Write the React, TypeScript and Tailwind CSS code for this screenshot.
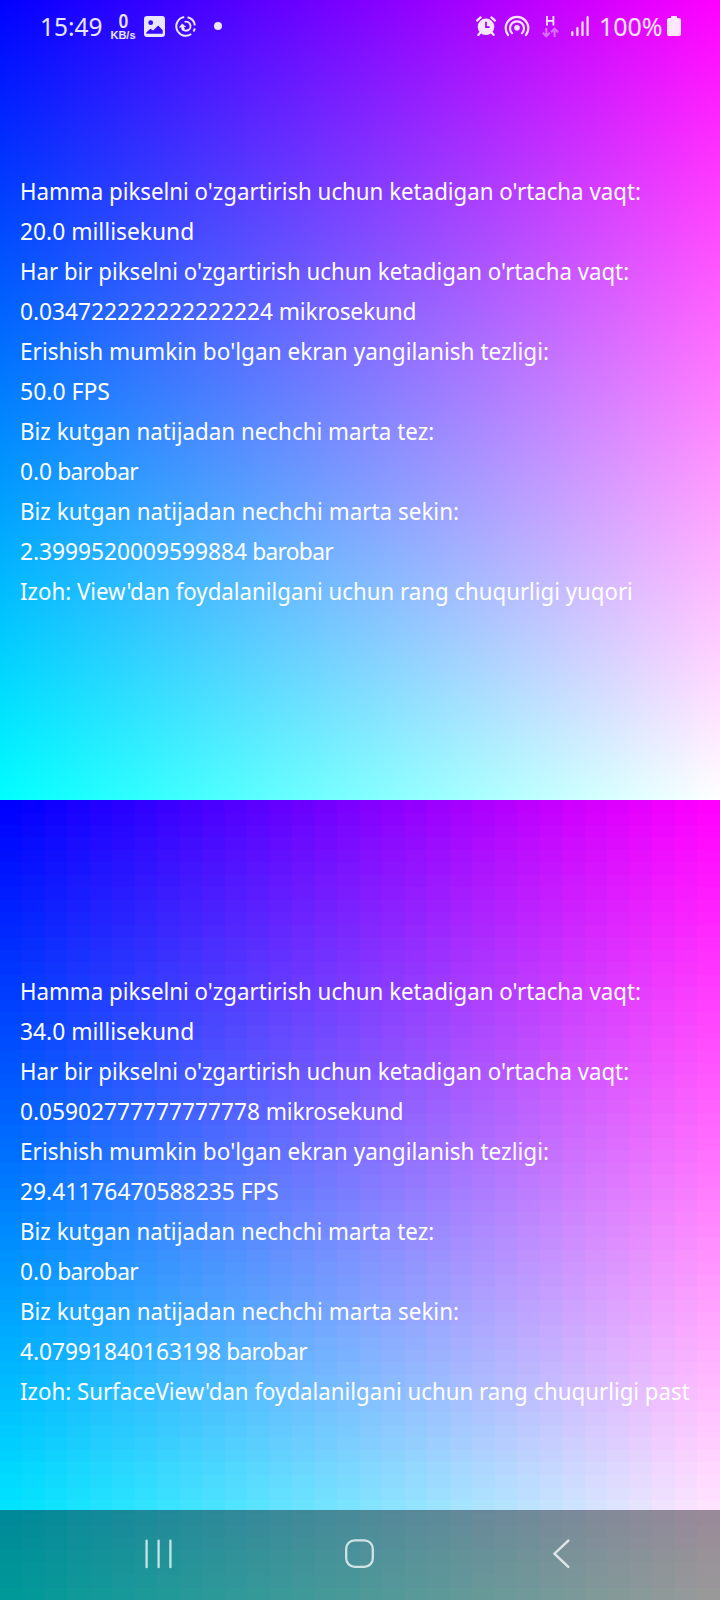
type Line = { value?: string; text: string; scale: string; tracking?: string };

const viewLines: Line[] = [
  { text: "Hamma pikselni o'zgartirish uchun ketadigan o'rtacha vaqt:", scale: "scale-x-[0.928]" },
  { text: "20.0 millisekund", scale: "scale-x-[0.95]" },
  { text: "Har bir pikselni o'zgartirish uchun ketadigan o'rtacha vaqt:", scale: "scale-x-[0.926]" },
  { value: "0.034722222222222224", text: " mikrosekund", scale: "scale-x-[0.947]", tracking: "tracking-[-0.22px]" },
  { text: "Erishish mumkin bo'lgan ekran yangilanish tezligi:", scale: "scale-x-[0.941]" },
  { text: "50.0 FPS", scale: "scale-x-[0.957]" },
  { text: "Biz kutgan natijadan nechchi marta tez:", scale: "scale-x-[0.932]" },
  { value: "0.0", text: " barobar", scale: "scale-x-[0.947]", tracking: "tracking-[-0.75px]" },
  { text: "Biz kutgan natijadan nechchi marta sekin:", scale: "scale-x-[0.934]" },
  { value: "2.3999520009599884", text: " barobar", scale: "scale-x-[0.947]", tracking: "tracking-[-0.75px]" },
  { text: "Izoh: View'dan foydalanilgani uchun rang chuqurligi yuqori", scale: "scale-x-[0.926]" },
];

const surfaceLines: Line[] = [
  viewLines[0],
  { text: "34.0 millisekund", scale: "scale-x-[0.95]" },
  viewLines[2],
  { value: "0.05902777777777778", text: " mikrosekund", scale: "scale-x-[0.947]", tracking: "tracking-[-0.22px]" },
  viewLines[4],
  { text: "29.41176470588235 FPS", scale: "scale-x-[0.95]" },
  viewLines[6],
  viewLines[7],
  viewLines[8],
  { value: "4.07991840163198", text: " barobar", scale: "scale-x-[0.947]", tracking: "tracking-[-0.75px]" },
  { text: "Izoh: SurfaceView'dan foydalanilgani uchun rang chuqurligi past", scale: "scale-x-[0.927]" },
];

// Hard-edged colour steps, one per level of an RGB565 channel.
function steps(direction: string, levels: number, color: (v: number) => string) {
  const stops = Array.from({ length: levels }, (_, i) => {
    const value = Math.round((i * 255) / (levels - 1));
    return `${color(value)} ${(i * 100) / levels}% ${((i + 1) * 100) / levels}%`;
  });
  return `linear-gradient(${direction}, ${stops.join(", ")})`;
}

const lowDepth = [
  steps("to right", 32, (v) => `rgb(${v}, 0, 0)`),
  steps("to bottom", 64, (v) => `rgb(0, ${v}, 0)`),
].join(", ");

function Lines({ lines }: { lines: Line[] }) {
  return (
    <div className="flex flex-col items-start px-5 pt-[171px] text-2xl leading-10 text-white">
      {lines.map((line) => (
        <p key={line.value ?? line.text} className={`h-10 origin-left whitespace-pre ${line.scale}`}>
          {line.value}
          <span className={line.tracking}>{line.text}</span>
        </p>
      ))}
    </div>
  );
}

function StatusBar() {
  return (
    <header className="absolute inset-x-0 top-0 flex h-[52px] items-start text-white/90">
      <span className="ml-10 mt-[6px] w-[69px] origin-left scale-x-[0.94] text-[26px] leading-10">15:49</span>
      <span className="mt-[13px] flex w-7 flex-col items-center text-center font-['Liberation_Sans',sans-serif] font-bold">
        <span className="scale-x-[0.9] font-['Noto_Sans',sans-serif] text-[19px] font-semibold leading-[17px]">0</span>
        <span className="text-[11px] leading-[11px]">KB/s</span>
      </span>
      <svg className="ml-[7px] mt-4 h-[21px] w-[21px]" viewBox="0 0 21 21">
        <path
          fill="currentColor"
          fillRule="evenodd"
          d="M3 0h15a3 3 0 0 1 3 3v15a3 3 0 0 1-3 3H3a3 3 0 0 1-3-3V3a3 3 0 0 1 3-3ZM6.7 4.3a2.4 2.4 0 1 0 0 4.8 2.4 2.4 0 0 0 0-4.8ZM2.3 17.8h16.4v-3.6l-4.5-4.7-5.1 5.1-2.7-1.9-4.1 3.8Z"
        />
      </svg>
      <svg className="ml-[10px] mt-4 h-[21px] w-[21px]" viewBox="0 0 21 21" fill="none" stroke="currentColor" strokeWidth="2">
        <path d="M9.2 1.1A9.4 9.4 0 1 0 16.2 18M18.4 15.5A9.4 9.4 0 0 0 19.8 12.4M19.8 9.3A9.4 9.4 0 0 0 12.6 1.3" />
        <path d="M9.6 5.9A4.5 4.5 0 1 1 7 12.2" />
        <path fill="currentColor" stroke="none" d="m3.8 11.4 3.4-4 4 3.6-2.3.2 1 1.8-2.6 1.2-1-2.8Z" />
      </svg>
      <svg className="ml-[18px] mt-[22px] h-2 w-2" viewBox="0 0 8 8">
        <circle cx="4" cy="4" r="4" fill="currentColor" />
      </svg>
      <svg className="ml-[254px] mt-4 h-5 w-5" viewBox="0 0 20 20">
        <circle cx="10" cy="10.8" r="8.3" fill="currentColor" />
        <path d="M1 4.6 4.6 1.4M19 4.6 15.4 1.4M4.2 16.8 2.3 19M15.8 16.8 17.7 19" stroke="currentColor" strokeWidth="2.2" strokeLinecap="round" />
        <path d="M10 5.8v5.3h3.6" fill="none" stroke="#a400ff" strokeWidth="1.7" />
      </svg>
      <svg className="ml-[8px] mt-[15px] h-[22px] w-[26px]" viewBox="0 0 26 22" fill="none" stroke="currentColor" strokeWidth="2.2" strokeLinecap="round">
        <circle cx="13" cy="12.8" r="2.8" fill="currentColor" stroke="none" />
        <path d="M4 20A11.3 11.3 0 1 1 22 20" />
        <path d="M8 18.2A7 7 0 1 1 18 18.2" />
      </svg>
      <svg className="ml-3 mt-4 h-[22px] w-[17px]" viewBox="0 0 17 22" fill="none" stroke="currentColor" strokeWidth="2">
        <path strokeWidth="1.8" d="M5 0v9.5M11.4 0v9.5M5 4.8h6.4" />
        <path opacity=".45" d="M4.3 12v8M.8 16.8l3.5 3.5 3.5-3.5M12.6 21v-8M9.1 16.2l3.5-3.5 3.5 3.5" />
      </svg>
      <svg className="ml-3 mt-4 h-5 w-[18px]" viewBox="0 0 18 20" stroke="currentColor" strokeWidth="2.2" strokeLinecap="round">
        <path d="M1.3 16v3M6.4 12v7M11.5 6.3V19M16.6 1.2V19" />
      </svg>
      <span className="ml-[10px] mt-[6px] w-[68px] origin-left scale-x-[0.96] text-[26px] leading-10">100%</span>
      <svg className="mt-4 h-5 w-[14px]" viewBox="0 0 14 20" fill="currentColor">
        <path d="M4 0h6v2h2a2 2 0 0 1 2 2v14a2 2 0 0 1-2 2H2a2 2 0 0 1-2-2V4a2 2 0 0 1 2-2h2Z" />
      </svg>
    </header>
  );
}

function NavigationBar() {
  return (
    <nav className="absolute inset-x-0 bottom-0 flex h-[90px] items-start bg-black/40 pt-[29px] text-white/75">
      <svg className="ml-[144px] h-[30px] w-[30px]" viewBox="0 0 30 30" stroke="currentColor" strokeWidth="2.3" strokeLinecap="round">
        <path d="M2.6 1.6v26.6M14.6 1.6v26.6M26.4 1.6v26.6" />
      </svg>
      <svg className="ml-[171px] h-[30px] w-[30px]" viewBox="0 0 30 30" fill="none" stroke="currentColor" strokeWidth="2.3">
        <rect x="1.2" y="1.3" width="26.6" height="26.6" rx="8.5" />
      </svg>
      <svg className="ml-[176px] h-[30px] w-5" viewBox="0 0 20 30" fill="none" stroke="currentColor" strokeWidth="2.5" strokeLinecap="round">
        <path d="M17.3 1.6 3.5 14.7l13.8 13.1" />
      </svg>
    </nav>
  );
}

export default function App() {
  return (
    <div className="relative flex h-[1600px] w-[720px] flex-col overflow-hidden font-['Noto_Sans',sans-serif]">
      <section className="h-[800px] bg-[#0000ff] bg-[linear-gradient(to_right,#000000,#ff0000),linear-gradient(to_bottom,#000000,#00ff00)] bg-blend-screen">
        <Lines lines={viewLines} />
      </section>
      <section className="h-[800px] bg-[#0000ff] bg-blend-screen" style={{ backgroundImage: lowDepth }}>
        <Lines lines={surfaceLines} />
      </section>
      <StatusBar />
      <NavigationBar />
    </div>
  );
}
